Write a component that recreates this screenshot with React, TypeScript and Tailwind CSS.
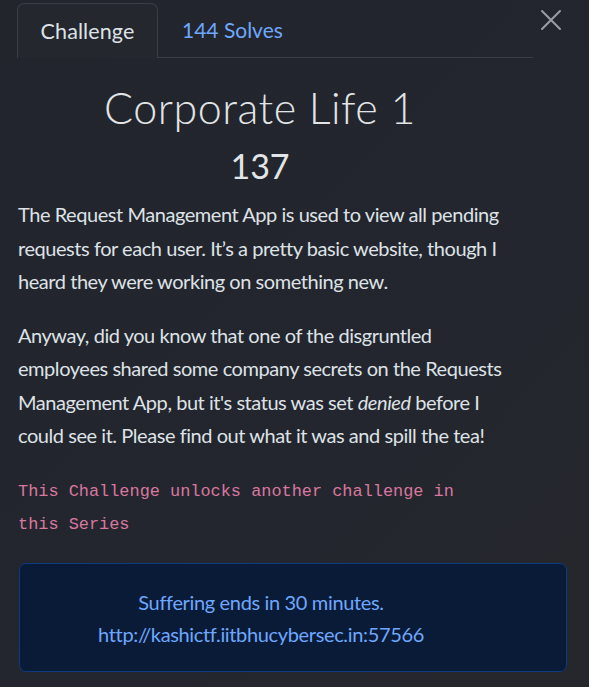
import React from "react";

const L = ({ children }: { children: React.ReactNode }) => (
  <span className="block whitespace-nowrap">{children}</span>
);

export default function App() {
  return (
    <div
      className="w-[589px] h-[687px] overflow-hidden bg-[linear-gradient(135deg,#22252c_0%,#23262e_60%,#25272c_100%)] text-[#dee2e6]"
      style={{ fontFamily: "Lato, 'Noto Sans', sans-serif" }}
    >
      <div className="flex items-start pl-[17px] pr-[26px] pt-[3px]">
        <div className="flex flex-1 items-end border-b border-[#3a3e46]">
          <div className="-mb-px flex h-[55px] w-[141px] items-center justify-center rounded-t-[7px] border border-b-0 border-[#3a3e46] bg-[#24272e] text-[21.5px] tracking-[0.1px] text-[#dee2e6]">
            Challenge
          </div>
          <div className="flex h-[54px] items-center pl-[24px] text-[21px] text-[#6ea8fe]">
            144 Solves
          </div>
        </div>
        <div className="ml-[6px] mt-[5px] flex h-[24px] w-[24px] items-center justify-center text-[#9a9da3]">
          <svg width="22" height="22" viewBox="0 0 22 22" fill="none" stroke="currentColor" strokeWidth="2" strokeLinecap="round">
            <path d="M2 2 L20 20 M20 2 L2 20" />
          </svg>
        </div>
      </div>

      <div className="px-[18px]">
        <div className="w-[484px]">
          <h2 className="mt-[23px] text-center text-[43px] font-light leading-[53px] tracking-[0.5px] text-[#e2e5e8]">
            Corporate Life 1
          </h2>
          <h3 className="mt-[12px] text-center text-[34px] leading-[40px] text-[#e2e5e8]">137</h3>
        </div>
        <div className="mt-[12px] text-[20px] leading-[33.5px] tracking-[-0.45px]">
          <p>
            <L>The Request Management App is used to view all pending</L>
            <L>requests for each user. It’s a pretty basic website, though I</L>
            <L>heard they were working on something new.</L>
          </p>
          <p className="mt-[20px]">
            <L>Anyway, did you know that one of the disgruntled</L>
            <L>employees shared some company secrets on the Requests</L>
            <L>
              Management App, but it's status was set <em>denied</em> before I
            </L>
            <L>could see it. Please find out what it was and spill the tea!</L>
          </p>
          <p
            className="mt-[22px] text-[16.9px] leading-[33px] tracking-normal text-[#d8789f]"
            style={{ fontFamily: "'Liberation Mono', 'DejaVu Sans Mono', monospace" }}
          >
            <L>This Challenge unlocks another challenge in</L>
            <L>this Series</L>
          </p>
        </div>
        <div className="ml-px mt-[22px] h-[109px] w-[548px] rounded-[7px] border border-[#0d3a80] bg-[#0a1b38] pt-[22px] text-[20px] leading-[32px] tracking-[-0.35px] text-[#6ea8fe]">
          <div className="w-[482px] text-center">
            <div>Suffering ends in 30 minutes.</div>
            <div>http://kashictf.iitbhucybersec.in:57566</div>
          </div>
        </div>
      </div>
    </div>
  );
}
